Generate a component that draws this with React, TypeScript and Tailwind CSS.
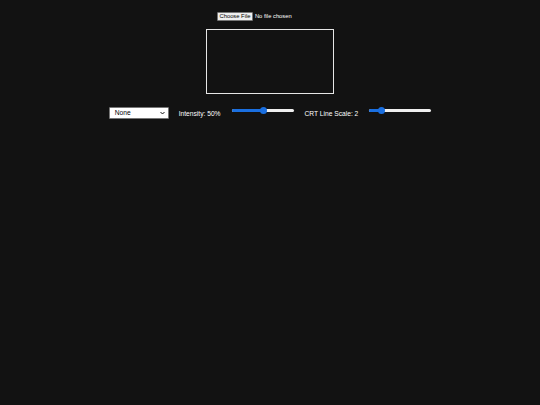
const font = { fontFamily: '"Liberation Sans", Arial, sans-serif' };

const Slider = ({ pct }: { pct: number }) => (
  <div className="relative w-[62px] h-[8px] flex items-center">
    <div className="w-full h-[3px] rounded-full bg-[#efefef] overflow-hidden flex">
      <div className="h-full bg-[#1a6fe0]" style={{ width: `${pct}%` }} />
    </div>
    <div
      className="absolute top-[1px] w-[7px] h-[7px] -ml-[3.5px] rounded-full bg-[#1a6fe0]"
      style={{ left: `${pct}%` }}
    />
  </div>
);

export default function App() {
  return (
    <div
      className="w-[540px] h-[405px] bg-[#121212] text-white flex flex-col items-center"
      style={font}
    >
      {/* File input */}
      <div className="mt-[12px] h-[9px] w-[128px] flex items-center pl-[11px]">
        <div className="h-[9px] px-[1.5px] flex items-center bg-[#efefef] border border-[#767676] rounded-[1px] text-black text-[5.8px] leading-none">
          Choose File
        </div>
        <span className="ml-[2px] text-[5.8px] leading-none">No file chosen</span>
      </div>

      {/* Canvas */}
      <div className="mt-[8px] w-[128px] h-[65px] border border-[#e6e6e6] bg-[#121212]" />

      {/* Controls */}
      <div className="mt-[13px] flex items-start text-[6.67px] leading-none">
        <div className="w-[60px] h-[12px] bg-white border border-[#767676] rounded-[1px] text-black flex items-center justify-between pl-[5px] pr-[3px]">
          <span>None</span>
          <svg width="5" height="4" viewBox="0 0 10 6">
            <path d="M1 1l4 4 4-4" fill="none" stroke="#000" strokeWidth="1.8" />
          </svg>
        </div>
        <span className="ml-[10px] mt-[3.5px]">Intensity: 50%</span>
        <div className="ml-[11px] -mt-[1px]">
          <Slider pct={51} />
        </div>
        <span className="ml-[11px] mt-[3.5px]">CRT Line Scale: 2</span>
        <div className="ml-[11px] -mt-[1px]">
          <Slider pct={20} />
        </div>
      </div>
    </div>
  );
}
